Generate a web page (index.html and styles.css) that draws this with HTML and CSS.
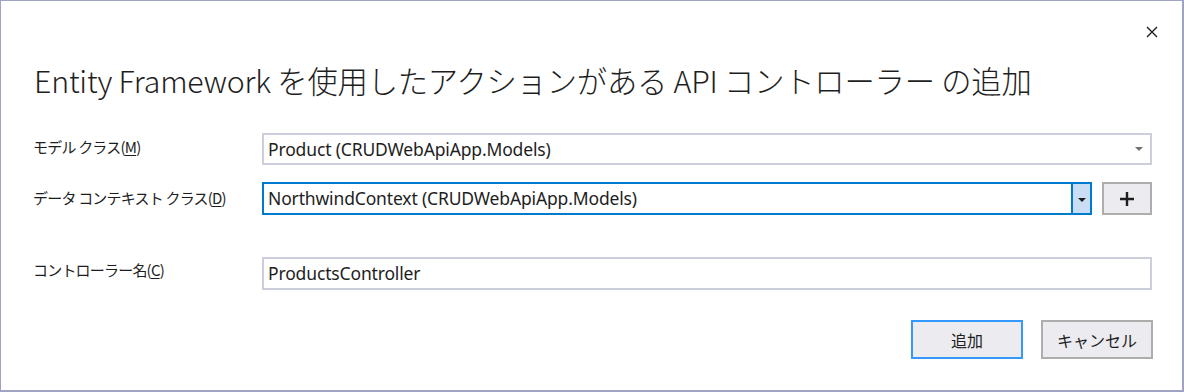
FILE: index.html
```html
<!DOCTYPE html>
<html lang="ja">
<head>
<meta charset="utf-8">
<link rel="stylesheet" href="styles.css">
</head>
<body>
<div class="dialog">
  <div class="titlebar">
    <button class="close" aria-label="閉じる">
      <svg width="12" height="12" viewBox="0 0 12 12"><path d="M1 1 L11 11 M11 1 L1 11" stroke="#1e1e1e" stroke-width="1.4" fill="none"/></svg>
    </button>
  </div>
  <h1 class="title">Entity Framework を使用したアクションがある API コントローラー の追加</h1>
  <div class="form">
    <label class="label row1">モデル クラス(<u>M</u>)</label>
    <div class="combo row1">
      <span class="value">Product (CRUDWebApiApp.Models)</span>
      <span class="arrow"></span>
    </div>

    <label class="label row2">データ コンテキスト クラス(<u>D</u>)</label>
    <div class="row2 ctxrow">
      <div class="combo focused">
        <span class="value">NorthwindContext (CRUDWebApiApp.Models)</span>
        <span class="dropbtn"><span class="arrow dark"></span></span>
      </div>
      <button class="plus">
        <svg width="16" height="16" viewBox="0 0 16 16"><path d="M8 1 V15 M1 8 H15" stroke="#1e1e1e" stroke-width="2.4" fill="none"/></svg>
      </button>
    </div>

    <label class="label row3">コントローラー名(<u>C</u>)</label>
    <div class="textbox row3"><span class="value">ProductsController</span></div>
  </div>
  <div class="buttons">
    <button class="btn primary">追加</button>
    <button class="btn">キャンセル</button>
  </div>
</div>
</body>
</html>
```

FILE: styles.css
```css
* { box-sizing: border-box; }
html, body { margin: 0; padding: 0; background: #ffffff; }
body {
  font-family: "Noto Sans", "Noto Sans CJK JP", sans-serif;
  color: #1e1e1e;
}
.dialog {
  width: 1184px;
  height: 392px;
  border-style: solid;
  border-color: #a0a3c2;
  border-width: 1px 2px 2px 1px;
  background: #fff;
  display: flex;
  flex-direction: column;
}
.titlebar {
  height: 44px;
  display: flex;
  justify-content: flex-end;
  align-items: flex-start;
  padding: 24px 23px 0 0;
}
.close {
  width: 14px;
  height: 14px;
  padding: 0;
  border: 0;
  background: transparent;
  display: flex;
  align-items: center;
  justify-content: center;
}
.title {
  margin: 14px 0 0 33px;
  font-family: "Noto Sans CJK JP", sans-serif;
  font-weight: 300;
  font-size: 30.3px;
  line-height: 42px;
  color: #1e1e1e;
  letter-spacing: -0.2px;
}
.form {
  margin-top: 32px;
  padding: 0 30px 0 32px;
  display: grid;
  grid-template-columns: 229px 1fr;
  grid-template-rows: 32px 33px 58px;
  row-gap: 17px;
}
.form .row3 { margin-top: 25px; }
.label {
  font-family: "Noto Sans CJK JP", sans-serif;
  font-size: 15px;
  letter-spacing: -0.8px;
  display: flex;
  align-items: center;
  padding-bottom: 6px;
  color: #1e1e1e;
}
.label.row2 { padding-bottom: 2px; }
.label.row3 { padding-bottom: 8px; }
.label u { text-underline-offset: 2px; }
.combo, .textbox {
  height: 32px;
  border: 2px solid #cccedb;
  display: flex;
  align-items: center;
  font-size: 17.5px;
  background: #fff;
}
.textbox { height: 33px; }
.value {
  flex: 1;
  padding-left: 4px;
  white-space: nowrap;
  overflow: hidden;
  font-family: "Noto Sans", sans-serif;
  letter-spacing: -0.15px;
  padding-bottom: 1px;
}
.arrow {
  width: 0;
  height: 0;
  border-left: 4px solid transparent;
  border-right: 4px solid transparent;
  border-top: 4px solid #717171;
  margin-right: 7px;
}
.arrow.dark { border-top-color: #1e1e1e; margin: 0; }
.ctxrow {
  display: flex;
  gap: 10px;
}
.combo.focused {
  flex: 1;
  height: 33px;
  border-color: #007acc;
}
.dropbtn {
  width: 19px;
  height: 100%;
  background: #c9def5;
  border-left: 2px solid #007acc;
  display: flex;
  align-items: center;
  justify-content: center;
  padding-top: 2px;
}
.plus {
  width: 50px;
  height: 33px;
  background: #ececf0;
  border: 2px solid #adadad;
  display: flex;
  align-items: center;
  justify-content: center;
  padding: 0;
}
.buttons {
  margin-top: auto;
  margin-bottom: 31px;
  padding-right: 29px;
  display: flex;
  justify-content: flex-end;
  gap: 18px;
}
.btn {
  width: 112px;
  height: 39px;
  background: #ececf0;
  border: 2px solid #adadad;
  font-family: "Noto Sans CJK JP", sans-serif;
  font-size: 16px;
  color: #1e1e1e;
  padding: 0;
}
.btn.primary { border-color: #3399ff; }
```
